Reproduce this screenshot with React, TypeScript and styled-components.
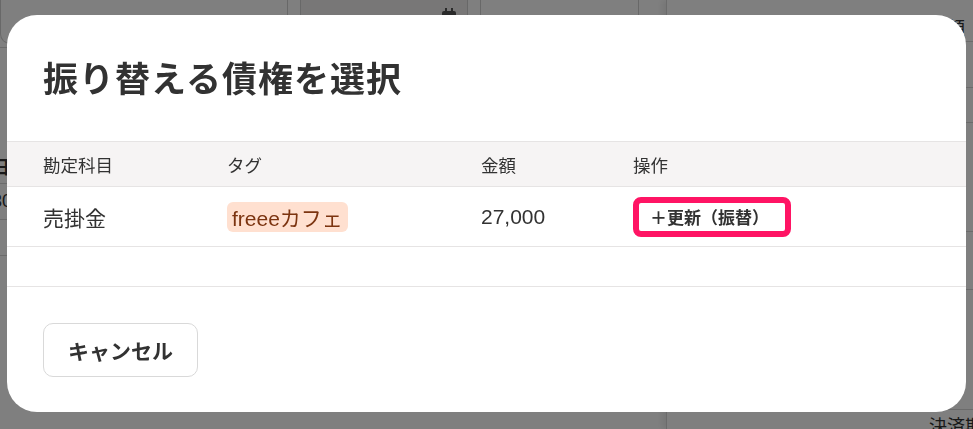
import styled, { createGlobalStyle } from 'styled-components';

const GlobalStyle = createGlobalStyle`
  html, body {
    margin: 0;
    padding: 0;
    width: 973px;
    height: 429px;
    overflow: hidden;
    font-family: "Liberation Sans", "Noto Sans CJK JP", sans-serif;
    color: #323232;
    background: #fff;
  }
  * { box-sizing: border-box; }
`;

// underlying page (mostly hidden by the overlay)
const Page = styled.div`
  width: 973px;
  height: 429px;
  overflow: hidden;
  display: flex;
  gap: 26px;
  background: #fff;
`;

const PageMain = styled.div`
  width: 640px;
  flex-shrink: 0;
  display: flex;
  flex-direction: column;
`;

const CardRow = styled.div`
  display: flex;
  gap: 12px;
  height: 48px;
  border-bottom: 1px solid #d6d6d6;
`;

const Card = styled.div<{ $w: number; $shade?: boolean }>`
  position: relative;
  width: ${({ $w }) => $w}px;
  height: 44px;
  border: 1px solid #d0d0d0;
  border-top: none;
  border-radius: 0 0 10px 10px;
  background: ${({ $shade }) => ($shade ? '#f1eeee' : '#fff')};
`;

const CalendarIcon = styled.svg`
  position: absolute;
  right: 10px;
  top: 8px;
`;

const PageRows = styled.div`
  display: flex;
  flex-direction: column;
  margin-left: -8px;
  padding-top: 100px;
`;

const PageRow = styled.div<{ $bold?: boolean }>`
  height: 36px;
  display: flex;
  align-items: center;
  border-bottom: 1px solid #d6d6d6;
  font-size: 18px;
  font-weight: ${({ $bold }) => ($bold ? 700 : 400)};
`;

const SidePanel = styled.div`
  flex: 1;
  border-left: 1px solid #d6d6d6;
  box-shadow: -4px 0 6px rgba(0, 0, 0, 0.08);
  display: flex;
  flex-direction: column;
  padding-top: 12px;
`;

const SideRow = styled.div<{ $h: number }>`
  flex-shrink: 0;
  height: ${({ $h }) => $h}px;
  display: flex;
  align-items: center;
  border-bottom: 1px solid #d6d6d6;
  font-size: 18px;
  padding-left: 262px;
  white-space: nowrap;
`;

const Overlay = styled.div`
  position: fixed;
  inset: 0;
  background: rgba(0, 0, 0, 0.5);
  display: flex;
  align-items: flex-start;
  justify-content: center;
  padding-top: 15px;
`;

const Modal = styled.div`
  width: 959px;
  height: 397px;
  background: #fff;
  border-radius: 30px;
  display: flex;
  flex-direction: column;
  overflow: hidden;
`;

const Title = styled.h1`
  margin: 0;
  padding: 38px 36px 0;
  font-size: 35px;
  line-height: 48px;
  letter-spacing: 1px;
  font-weight: 700;
  color: #323232;
  font-family: "Noto Sans CJK JP", sans-serif;
`;

const Table = styled.div`
  margin-top: 40px;
  border-top: 1px solid #e6e4e4;
`;

const Row = styled.div<{ $head?: boolean; $h: number }>`
  display: grid;
  grid-template-columns: 184px 254px 152px 1fr;
  align-items: center;
  padding-left: 36px;
  height: ${({ $h }) => $h}px;
  background: ${({ $head }) => ($head ? '#f6f4f4' : '#fff')};
  border-bottom: 1px solid #e6e4e4;
  font-size: ${({ $head }) => ($head ? 17.5 : 21)}px;
  color: #323232;
`;

const Cell = styled.div`
  white-space: nowrap;
`;

const Tag = styled.span`
  display: inline-flex;
  align-items: center;
  height: 30px;
  padding: 0 5px;
  border-radius: 6px;
  background: #ffe0d0;
  color: #7c3410;
  font-size: 21px;
`;

const UpdateButton = styled.button`
  display: inline-flex;
  align-items: center;
  height: 40px;
  padding: 0 16px 0 11px;
  border: 6px solid #ff1464;
  border-radius: 8px;
  background: #fff;
  color: #323232;
  font-family: "Noto Sans CJK JP", sans-serif;
  font-size: 17px;
  font-weight: 700;
  cursor: pointer;
`;

const Footer = styled.div`
  padding: 36px 36px 0;
`;

const CancelButton = styled.button`
  width: 155px;
  height: 54px;
  border: 1px solid #d9d9d9;
  border-radius: 10px;
  background: #fff;
  color: #323232;
  font-family: "Noto Sans CJK JP", sans-serif;
  font-size: 21px;
  font-weight: 700;
  cursor: pointer;
`;

const App = () => {
  return (
    <>
      <GlobalStyle />
      <Page>
        <PageMain>
          <CardRow>
            <Card $w={288} />
            <Card $w={168} $shade>
              <CalendarIcon width="16" height="16" viewBox="0 0 16 16">
                <rect x="1" y="3" width="14" height="12" rx="2" fill="#555" />
                <rect x="4" y="0" width="2" height="5" fill="#555" />
                <rect x="10" y="0" width="2" height="5" fill="#555" />
              </CalendarIcon>
            </Card>
            <Card $w={159} />
          </CardRow>
          <PageRows>
            <PageRow $bold>日付</PageRow>
            <PageRow>30</PageRow>
            <PageRow />
          </PageRows>
        </PageMain>
        <SidePanel>
          <SideRow $h={30}>金額</SideRow>
          <SideRow $h={46} />
          <SideRow $h={35}>
            <b>(</b>
          </SideRow>
          <SideRow $h={109} />
          <SideRow $h={58}>謝</SideRow>
          <SideRow $h={120} />
          <SideRow $h={30}>決済期</SideRow>
        </SidePanel>
      </Page>
      <Overlay>
        <Modal>
          <Title>振り替える債権を選択</Title>
          <Table>
            <Row $head $h={45}>
              <Cell>勘定科目</Cell>
              <Cell>タグ</Cell>
              <Cell>金額</Cell>
              <Cell>操作</Cell>
            </Row>
            <Row $h={60}>
              <Cell>売掛金</Cell>
              <Cell>
                <Tag>freeeカフェ</Tag>
              </Cell>
              <Cell>27,000</Cell>
              <Cell>
                <UpdateButton>＋更新（振替）</UpdateButton>
              </Cell>
            </Row>
            <Row $h={40} />
          </Table>
          <Footer>
            <CancelButton>キャンセル</CancelButton>
          </Footer>
        </Modal>
      </Overlay>
    </>
  );
};

export default App;
